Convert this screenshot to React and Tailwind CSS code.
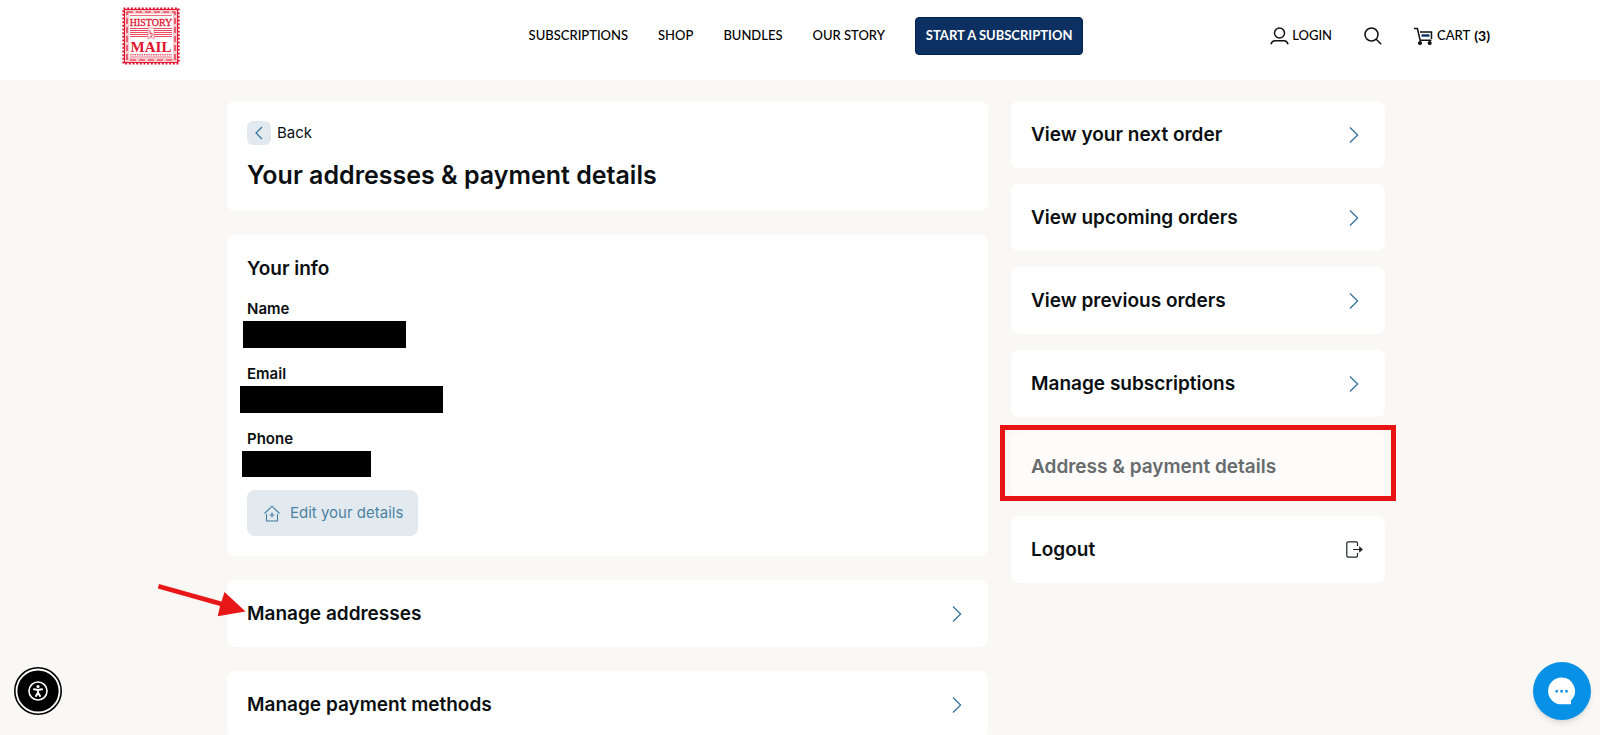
import React from 'react';

const NAV_LINKS = ['SUBSCRIPTIONS', 'SHOP', 'BUNDLES', 'OUR STORY'];

const MENU = [
  { label: 'View your next order' },
  { label: 'View upcoming orders' },
  { label: 'View previous orders' },
  { label: 'Manage subscriptions' },
  { label: 'Address & payment details', current: true },
  { label: 'Logout', logout: true },
];

const DETAILS = [
  { label: 'Name', bar: '-ml-1 h-[27px] w-[163px]' },
  { label: 'Email', bar: '-ml-[7px] h-[27px] w-[203px]' },
  { label: 'Phone', bar: '-ml-[5px] h-[26px] w-[129px]' },
];

const Chevron = () => (
  <svg width="10" height="18" viewBox="0 0 10 18" fill="none" stroke="#35749a" strokeWidth="1.3" aria-hidden="true">
    <path d="M1 1.5 8.6 9 1 16.5" />
  </svg>
);

const Logo = () => (
  <svg width="58" height="58" viewBox="0 0 58 58" role="img" aria-label="History by Mail">
    <rect x="2" y="2" width="54" height="54" fill="#f9ccd2" />
    <rect x="1.5" y="1.5" width="55" height="55" fill="none" stroke="#e0152f" strokeWidth="2.2" strokeDasharray="2 1.667" />
    <rect x="2.5" y="2.5" width="53" height="53" fill="none" stroke="#e0152f" strokeWidth="1" />
    <rect x="5" y="5" width="48" height="48" fill="none" stroke="#e0152f" strokeWidth="1.2" strokeDasharray="6 3" />
    <rect x="7" y="7" width="44" height="44" fill="#fff" />
    <path d="M8 8.5h42M8 50h42" stroke="#ee6a7c" strokeWidth="1" />
    <text x="29" y="18.5" textAnchor="middle" fontFamily="'Liberation Serif', serif" fontSize="10" fill="#e0152f" stroke="#e0152f" strokeWidth=".3">HISTORY</text>
    <path d="M8 21.5h42M8 23.5h42M8 25.5h42M8 27.5h42M8 29.5h42" stroke="#e94a5f" strokeWidth="1" />
    <path d="M26 21h6v11l-3-2-3 2z" fill="#fff" stroke="#ec7484" strokeWidth=".8" />
    <path d="M28 23v4l2-1v3l-2 1" fill="none" stroke="#e0152f" strokeWidth=".8" />
    <text x="29" y="44.5" textAnchor="middle" fontFamily="'Liberation Serif', serif" fontSize="15" fontWeight="700" fill="#e0152f">MAIL</text>
    <path d="M8 47.8h42" stroke="#e0152f" strokeWidth="1" strokeDasharray="1.5 .8" />
  </svg>
);

const UserIcon = () => (
  <svg width="19" height="18" viewBox="0 0 19 18" fill="none" stroke="#111" strokeWidth="1.5" aria-hidden="true">
    <circle cx="9.5" cy="6" r="5" />
    <path d="M1 17.2c.6-2.2 2-3.4 4-3.4h9c2 0 3.4 1.2 4 3.4" />
  </svg>
);

const SearchIcon = () => (
  <svg width="18" height="18" viewBox="0 0 18 18" fill="none" stroke="#111" strokeWidth="1.5" aria-hidden="true">
    <circle cx="7.5" cy="7.5" r="6.5" />
    <path d="m12.2 12.2 5 5" />
  </svg>
);

const CartIcon = () => (
  <svg width="19" height="18" viewBox="0 0 19 18" fill="none" stroke="#111" strokeWidth="1.5" aria-hidden="true">
    <path d="M0 1.5h3.4l2.7 11.7h11.3M6 5h11.5v7" />
    <path d="M7.5 8.5h8" stroke="#0b3061" strokeWidth="2.4" />
    <circle cx="6" cy="16" r="1.3" fill="#111" />
    <circle cx="15.7" cy="16" r="1.3" fill="#111" />
  </svg>
);

const HomePlusIcon = () => (
  <svg width="16" height="17" viewBox="0 0 16 17" fill="none" stroke="#3f7b9f" strokeWidth="1.1" aria-hidden="true">
    <path d="M.5 8.5 8 1.2l7.5 7.3M2.5 9v7h11V9M8 7.5v5M5.5 10h5" />
  </svg>
);

const LogoutIcon = () => (
  <svg width="17" height="17" viewBox="0 0 17 17" fill="none" stroke="#1f2429" strokeWidth="1.2" aria-hidden="true">
    <path d="M11.5 5V2.2A1.4 1.4 0 0 0 10.1.8H2.2A1.4 1.4 0 0 0 .8 2.2v12.6a1.4 1.4 0 0 0 1.4 1.4h7.9a1.4 1.4 0 0 0 1.4-1.4V12M7 8.5h8.5" />
    <path d="m13.8 6.5 2.2 2-2.2 2z" fill="#1f2429" />
  </svg>
);

const RowCard = ({ label }) => (
  <a href="#" className="flex h-[67px] items-center justify-between rounded-lg bg-white pr-[26px] pl-5 text-[19px] font-semibold">
    <span className="pt-0.5">{label}</span>
    <Chevron />
  </a>
);

const MenuItem = ({ item }) => {
  if (item.current) {
    return (
      <div className="relative">
        <a href="#" aria-current="page" className="flex h-[67px] items-center rounded-lg bg-[#fdfcfa] px-5 text-[19px] font-semibold text-[#676b6d]">
          <span className="pt-0.5">{item.label}</span>
        </a>
        <div className="pointer-events-none absolute -inset-x-[11px] -top-2 -bottom-px border-5 border-[#e81414]" />
      </div>
    );
  }
  if (item.logout) {
    return (
      <button type="button" className="flex h-[67px] w-full items-center justify-between rounded-lg bg-white pr-[22px] pl-5 text-[19px] font-semibold">
        <span className="pt-0.5">{item.label}</span>
        <LogoutIcon />
      </button>
    );
  }
  return <RowCard label={item.label} />;
};

const Header = () => (
  <header className="grid h-20 grid-cols-[1fr_auto_1fr] items-center bg-white pr-[110px] pb-2 pl-[122px] font-['Lato',sans-serif] text-[13px] font-medium text-black">
    <a href="#" className="justify-self-start"><Logo /></a>
    <nav className="flex items-center gap-[30px]">
      {NAV_LINKS.map((link) => (
        <a key={link} href="#">{link}</a>
      ))}
      <a href="#" className="flex h-[38px] items-center rounded-sm border border-[#061f52] bg-[#0b3061] px-[10px] font-bold text-white">START A SUBSCRIPTION</a>
    </nav>
    <div className="flex items-center justify-self-end">
      <a href="#" className="flex items-center gap-[3px]"><UserIcon />LOGIN</a>
      <button type="button" aria-label="Search" className="mx-8"><SearchIcon /></button>
      <a href="#" className="flex items-center gap-1">
        <CartIcon />
        <span>CART</span>
        <span className="text-sm font-bold">(3)</span>
      </a>
    </div>
  </header>
);

const App = () => (
  <div className="min-h-screen bg-[#f9f8f4] font-['Inter',sans-serif] text-[#0b0f12]">
    <Header />
    <div className="pt-[21px] pl-3">
      <div className="mx-auto grid max-w-[1158px] grid-cols-[1fr_374px] items-start gap-[23px]">
        <main className="flex flex-col gap-6">
          <section className="rounded-lg bg-white px-5 pt-5 pb-4">
            <button type="button" className="flex h-6 items-center gap-1.5 text-[15px]">
              <span className="flex size-6 items-center justify-center rounded-md bg-[#e2eaf0]">
                <svg width="8" height="14" viewBox="0 0 8 14" fill="none" stroke="#35749a" strokeWidth="1.2" aria-hidden="true">
                  <path d="M7 1 1 7l6 6" />
                </svg>
              </span>
              Back
            </button>
            <h1 className="mt-2.5 text-[25px] leading-10 font-semibold">Your addresses &amp; payment details</h1>
          </section>

          <section className="rounded-lg bg-white p-5">
            <h2 className="text-[19px] leading-7 font-semibold">Your info</h2>
            <dl className="mt-4 flex flex-col gap-4">
              {DETAILS.map((d) => (
                <div key={d.label}>
                  <dt className="text-[15px] leading-5 font-semibold">{d.label}</dt>
                  <dd className={`mt-0.5 bg-black ${d.bar}`} />
                </div>
              ))}
            </dl>
            <button type="button" className="mt-[13px] flex h-[46px] items-center gap-[10px] rounded-lg bg-[#e2eaf0] pr-[15px] pl-[17px] text-[15px] text-[#4c83a4]">
              <HomePlusIcon />
              Edit your details
            </button>
          </section>

          <div className="relative">
            <RowCard label="Manage addresses" />
            {/* pointer to the addresses row */}
            <svg className="pointer-events-none absolute top-0 -left-[70px]" width="90" height="40" viewBox="0 0 90 40" fill="#e81818" aria-hidden="true">
              <path d="M2 4 .8 8.6 63 26 60.7 36.2 88.5 31.5 67.5 12 64.5 21.5z" />
            </svg>
          </div>
          <RowCard label="Manage payment methods" />
        </main>

        <aside className="flex flex-col gap-4">
          {MENU.map((item) => <MenuItem key={item.label} item={item} />)}
        </aside>
      </div>
    </div>

    <button type="button" aria-label="Accessibility" className="fixed bottom-5 left-[14px] size-12">
      <svg width="48" height="48" viewBox="0 0 48 48" fill="none" aria-hidden="true">
        <circle cx="24" cy="24" r="24" fill="#000" />
        <circle cx="24" cy="24" r="21.5" stroke="#fff" strokeWidth="1.8" />
        <circle cx="24" cy="24" r="9" stroke="#fff" strokeWidth="1.6" />
        <circle cx="24" cy="19.5" r="1.6" fill="#fff" />
        <path d="M20 22.3 24 23l4-.7M24 23v3M24 25.5l-2 3.5M24 25.5l2 3.5" stroke="#fff" strokeWidth="2" strokeLinecap="round" />
      </svg>
    </button>
    <button type="button" aria-label="Chat" className="fixed right-[9px] bottom-[15px] flex size-[58px] items-center justify-center rounded-full bg-[#0691e6] shadow-md">
      <svg width="28" height="28" viewBox="0 0 28 28" aria-hidden="true">
        <path d="M13.5.5a13.5 13.5 0 0 1 9.5 23v3.8h-9.5a13.4 13.4 0 0 1 0-26.8z" fill="#fff" />
        <path d="M7.5 13h2.4v2.4H7.5zM12.4 13h2.4v2.4h-2.4zM17.3 13h2.4v2.4h-2.4z" fill="#0691e6" />
      </svg>
    </button>
  </div>
);

export default App;
